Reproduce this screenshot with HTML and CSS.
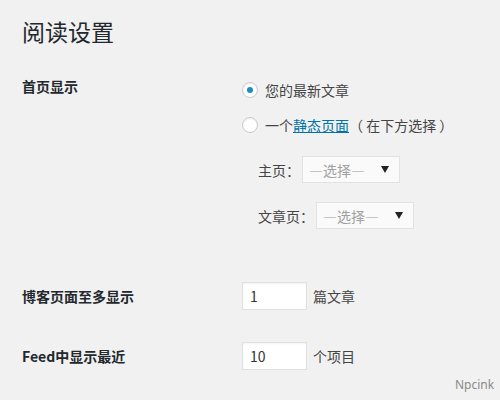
FILE: index.html
```html
<!DOCTYPE html>
<html lang="zh-CN">
<head>
<meta charset="utf-8">
<link rel="stylesheet" href="styles.css">
</head>
<body>
<div class="wrap">
  <h1 class="title">阅读设置</h1>
  <div class="row row-front">
    <div class="label">首页显示</div>
    <div class="field">
      <div class="option"><span class="radio checked"></span><span>您的最新文章</span></div>
      <div class="option"><span class="radio"></span><span>一个<a class="link" href="#">静态页面</a>（ 在下方选择 ）</span></div>
      <div class="sub sub-first"><span>主页：</span><span class="select"><span class="ph">—选择—</span><span class="arrow"></span></span></div>
      <div class="sub"><span>文章页：</span><span class="select"><span class="ph">—选择—</span><span class="arrow"></span></span></div>
    </div>
  </div>
  <div class="row row-posts">
    <div class="label">博客页面至多显示</div>
    <div class="field inline"><span class="input">1</span><span>篇文章</span></div>
  </div>
  <div class="row row-feed">
    <div class="label">Feed中显示最近</div>
    <div class="field inline"><span class="input">10</span><span>个项目</span></div>
  </div>
</div>
<div class="mark">Npcink</div>
</body>
</html>
```
FILE: styles.css
```css
html, body {
  margin: 0;
  padding: 0;
  background: #f1f1f1;
}
body {
  width: 500px;
  height: 400px;
  overflow: hidden;
  position: relative;
  font-family: "Noto Sans CJK SC", "Noto Sans", sans-serif;
  font-size: 14px;
  color: #444;
}
.wrap {
  padding: 17px 0 0 22px;
}
.title {
  margin: 0;
  font-size: 23px;
  font-weight: 400;
  line-height: 29px;
  color: #23282d;
}
.row {
  display: grid;
  grid-template-columns: 220px 1fr;
}
.label {
  font-weight: 700;
  color: #23282d;
  line-height: 20px;
}
.row-front {
  margin-top: 34px;
}
.row-front .label {
  margin-top: -4px;
}
.option {
  display: flex;
  align-items: center;
  height: 20px;
  margin-bottom: 15px;
}
.option + .option {
  margin-bottom: 0;
}
.radio {
  box-sizing: border-box;
  width: 16px;
  height: 16px;
  border-radius: 50%;
  border: 1px solid #c7cbcf;
  background: #fff;
  box-shadow: inset 0 1px 2px rgba(0,0,0,0.07);
  margin-right: 7px;
  display: flex;
  align-items: center;
  justify-content: center;
}
.radio.checked::after {
  content: "";
  width: 6px;
  height: 6px;
  border-radius: 50%;
  background: #1e8cbe;
}
.link {
  color: #0073aa;
  text-decoration: underline;
}
.sub {
  display: flex;
  align-items: center;
  padding-left: 16px;
  margin-top: 19px;
}
.sub-first {
  margin-top: 21px;
}
.select {
  box-sizing: border-box;
  width: 98px;
  height: 27px;
  margin-left: 2px;
  border: 1px solid #e2e2e2;
  background: #fafafa;
  display: flex;
  align-items: center;
  justify-content: space-between;
  padding: 0 10px 0 6px;
}
.ph {
  color: #a0a0a0;
}
.arrow {
  width: 0;
  height: 0;
  border-left: 4px solid transparent;
  border-right: 4px solid transparent;
  border-top: 7px solid #222;
}
.inline {
  display: flex;
  align-items: center;
}
.input {
  box-sizing: border-box;
  width: 65px;
  height: 28px;
  background: #fff;
  border: 1px solid #e0e0e0;
  box-shadow: inset 0 1px 2px rgba(0,0,0,0.05);
  display: flex;
  align-items: center;
  padding-left: 7px;
  color: #333;
  margin-right: 6px;
}
.row-posts {
  margin-top: 53px;
  align-items: center;
}
.row-feed {
  margin-top: 32px;
  align-items: center;
}
.mark {
  position: absolute;
  left: 455px;
  top: 376px;
  font-family: "Noto Sans", sans-serif;
  font-size: 12px;
  color: #8a8a8a;
}
```
